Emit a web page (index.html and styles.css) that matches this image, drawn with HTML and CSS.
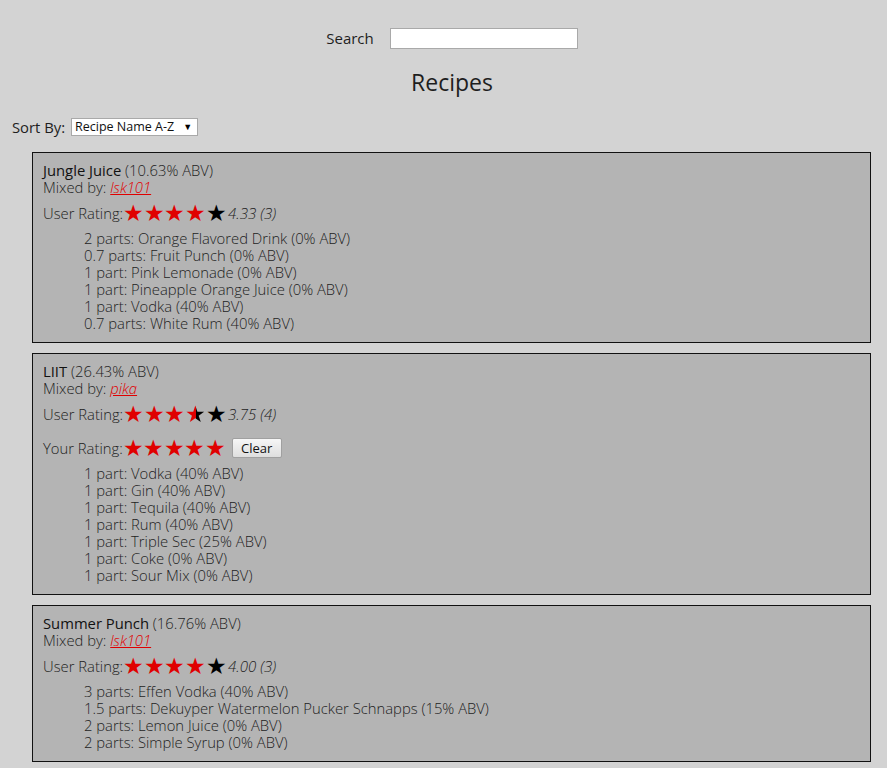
FILE: index.html
```html
<!DOCTYPE html>
<html>
<head>
<meta charset="utf-8">
<title>Recipes</title>
<link rel="stylesheet" href="styles.css">
</head>
<body>
<header class="header">
  <div class="search-row">
    <label class="search-label" for="q">Search</label>
    <input class="search-input" id="q" type="text">
  </div>
  <h1 class="title">Recipes</h1>
</header>
<div class="sort-row">
  <span class="sort-label">Sort By:</span>
  <span class="select-wrap"><select class="sort-select"><option>Recipe Name A-Z</option></select></span>
</div>

<div class="recipe">
  <div class="name"><span class="drink">Jungle Juice</span> (10.63% ABV)</div>
  <div class="mixed">Mixed by: <a class="user" href="#">lsk101</a></div>
  <div class="rating">
    <span class="rating-label">User Rating:</span>
    <span class="stars"><span class="star on">★</span><span class="star on">★</span><span class="star on">★</span><span class="star on">★</span><span class="star">★</span></span>
    <span class="score">4.33 (3)</span>
  </div>
  <ul class="ingredients">
    <li>2 parts: Orange Flavored Drink (0% ABV)</li>
    <li>0.7 parts: Fruit Punch (0% ABV)</li>
    <li>1 part: Pink Lemonade (0% ABV)</li>
    <li>1 part: Pineapple Orange Juice (0% ABV)</li>
    <li>1 part: Vodka (40% ABV)</li>
    <li>0.7 parts: White Rum (40% ABV)</li>
  </ul>
</div>

<div class="recipe">
  <div class="name"><span class="drink">LIIT</span> (26.43% ABV)</div>
  <div class="mixed">Mixed by: <a class="user" href="#">pika</a></div>
  <div class="rating">
    <span class="rating-label">User Rating:</span>
    <span class="stars"><span class="star on">★</span><span class="star on">★</span><span class="star on">★</span><span class="star half">★</span><span class="star">★</span></span>
    <span class="score">3.75 (4)</span>
  </div>
  <div class="rating">
    <span class="rating-label">Your Rating:</span>
    <span class="stars"><span class="star on">★</span><span class="star on">★</span><span class="star on">★</span><span class="star on">★</span><span class="star on">★</span></span>
    <button class="clear-btn" type="button">Clear</button>
  </div>
  <ul class="ingredients">
    <li>1 part: Vodka (40% ABV)</li>
    <li>1 part: Gin (40% ABV)</li>
    <li>1 part: Tequila (40% ABV)</li>
    <li>1 part: Rum (40% ABV)</li>
    <li>1 part: Triple Sec (25% ABV)</li>
    <li>1 part: Coke (0% ABV)</li>
    <li>1 part: Sour Mix (0% ABV)</li>
  </ul>
</div>

<div class="recipe">
  <div class="name"><span class="drink">Summer Punch</span> (16.76% ABV)</div>
  <div class="mixed">Mixed by: <a class="user" href="#">lsk101</a></div>
  <div class="rating">
    <span class="rating-label">User Rating:</span>
    <span class="stars"><span class="star on">★</span><span class="star on">★</span><span class="star on">★</span><span class="star on">★</span><span class="star">★</span></span>
    <span class="score">4.00 (3)</span>
  </div>
  <ul class="ingredients">
    <li>3 parts: Effen Vodka (40% ABV)</li>
    <li>1.5 parts: Dekuyper Watermelon Pucker Schnapps (15% ABV)</li>
    <li>2 parts: Lemon Juice (0% ABV)</li>
    <li>2 parts: Simple Syrup (0% ABV)</li>
  </ul>
</div>
</body>
</html>
```

FILE: styles.css
```css
html, body {
  background: #d3d3d3;
}
body {
  margin: 8px;
  font-family: "Open Sans", "DejaVu Sans", sans-serif;
  font-weight: 300;
  font-size: 14.8px;
  line-height: 17px;
  color: #1e1e1e;
}
.header {
  padding-left: 17px;
  text-align: center;
}
.search-row {
  display: flex;
  justify-content: center;
  align-items: center;
  gap: 16px;
  padding-top: 20px;
}
.search-label {
  font-size: 15px;
  font-weight: 400;
}
.search-input {
  width: 188px;
  height: 21px;
  box-sizing: border-box;
  border: 1px solid #a9a9a9;
  background: #fff;
  margin: 0;
  padding: 1px 2px;
}
.title {
  font-size: 23px;
  font-weight: 400;
  margin: 19px 0 0;
  line-height: 28px;
}
.sort-row {
  display: flex;
  align-items: center;
  gap: 6px;
  margin: 22px 0 0 4px;
}
.sort-label {
  font-size: 14.8px;
  font-weight: 400;
}
.select-wrap {
  position: relative;
  display: inline-block;
}
.select-wrap::after {
  content: "▼";
  position: absolute;
  right: 6px;
  top: 3px;
  font-size: 9px;
  line-height: 12px;
  color: #000;
  pointer-events: none;
}
.sort-select {
  appearance: none;
  -webkit-appearance: none;
  width: 127px;
  height: 18px;
  box-sizing: border-box;
  border: 1px solid #a9a9a9;
  border-radius: 0;
  background: #fff;
  font-family: "Open Sans", sans-serif;
  font-size: 12.5px;
  font-weight: 400;
  padding: 0 3px;
  color: #111;
  line-height: 16px;
  display: block;
}
.recipe {
  background: #b4b4b4;
  border: 1px solid #111;
  margin: 16px 8px 10px 24px;
  padding: 9px 10px 10px;
}
.recipe + .recipe {
  margin-top: 0;
}
.drink {
  font-weight: 400;
  color: #111;
}
.user {
  color: #e00000;
  font-style: italic;
}
.rating {
  display: flex;
  align-items: center;
  height: 26px;
  margin: 4px 0 4px;
}
.rating + .rating {
  margin-top: 8px;
}
.stars {
  display: inline-flex;
  font-family: "DejaVu Sans", sans-serif;
  font-size: 23px;
  line-height: 26px;
  margin-left: 0;
}
.star {
  color: #000;
  width: 20.6px;
  display: inline-block;
  text-align: center;
}
.star.on {
  color: #e00000;
}
.star.half {
  background: linear-gradient(90deg, #e00000 52%, #000 52%);
  -webkit-background-clip: text;
  background-clip: text;
  color: transparent;
}
.score {
  font-style: italic;
  margin-left: 2px;
  font-size: 15px;
}
.clear-btn {
  margin-left: 6px;
  height: 20px;
  width: 50px;
  padding: 0;
  font-family: "Open Sans", sans-serif;
  font-size: 13px;
  font-weight: 400;
  color: #111;
  background: linear-gradient(#f6f6f6, #dedede);
  border: 1px solid #a0a0a0;
  border-radius: 2px;
  line-height: 16px;
}
.ingredients {
  list-style: none;
  margin: 0;
  padding-left: 41px;
}
```
